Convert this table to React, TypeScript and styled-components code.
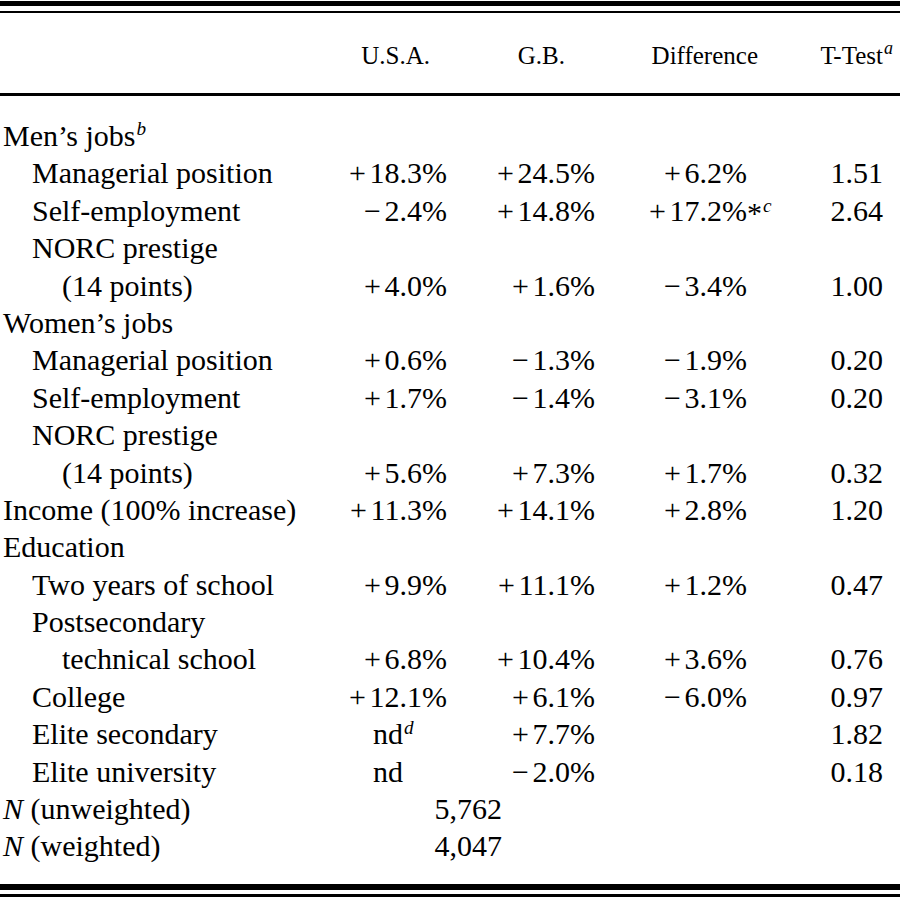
import React from "react";
import styled, { createGlobalStyle } from "styled-components";

const Global = createGlobalStyle`
  html, body { margin: 0; padding: 0; background: #fff; }
  body { font-family: "Liberation Serif", "Times New Roman", serif; color: #000; }
`;

const COLS = "330px 117px 148px 152px 136px 17px";

const Page = styled.div`
  width: 900px;
  padding-top: 1px;
  box-sizing: border-box;
`;

const Rule = styled.div<{ $h: number; $gap?: number }>`
  height: ${(p) => p.$h}px;
  margin-top: ${(p) => p.$gap ?? 0}px;
  background: #000;
`;

const HeaderRow = styled.div`
  display: grid;
  grid-template-columns: ${COLS};
  height: 80px;
  box-sizing: border-box;
  padding-top: 4px;
  align-items: center;
  font-size: 25px;
  line-height: 1;
`;

const HeadCell = styled.div<{ $shift: number }>`
  justify-self: end;
  margin-right: ${(p) => p.$shift}px;
  white-space: nowrap;
`;

const Body = styled.div`
  padding-top: 21px;
  padding-bottom: 19px;
`;

const Row = styled.div`
  display: grid;
  grid-template-columns: ${COLS};
  height: 37.4px;
  font-size: 30px;
  line-height: 37.4px;
`;

const Label = styled.div<{ $level: number }>`
  padding-left: ${(p) => [3, 32, 62][p.$level]}px;
  white-space: nowrap;
`;

const Num = styled.div`
  text-align: right;
  white-space: nowrap;
`;

const Span2 = styled.div`
  grid-column: span 2;
  text-align: right;
  padding-right: 93px;
`;

const Sign = styled.span`
  margin-right: 0.12em;
`;

const Sup = styled.sup<{ $big?: boolean }>`
  font-style: italic;
  font-size: ${(p) => (p.$big ? "0.72em" : "0.64em")};
  line-height: 0;
  vertical-align: 0.55em;
  margin-left: 1px;
`;

const Anchor = styled.span`
  position: relative;
`;

const Hang = styled.span`
  position: absolute;
  left: 100%;
  top: 0;
  white-space: nowrap;
`;

const Absent = styled.span`
  position: relative;
  display: inline-block;
  margin-right: 44px;
`;

const Ital = styled.i`
  font-style: italic;
`;

type RowData = {
  label: React.ReactNode;
  level: number;
  usa?: string;
  gb?: string;
  diff?: string;
  t?: string;
  usaNote?: string;
  diffNote?: string;
};

const rows: RowData[] = [
  { label: <>Men’s jobs<Sup>b</Sup></>, level: 0 },
  { label: "Managerial position", level: 1, usa: "+18.3", gb: "+24.5", diff: "+6.2", t: "1.51" },
  { label: "Self-employment", level: 1, usa: "-2.4", gb: "+14.8", diff: "+17.2", diffNote: "c", t: "2.64" },
  { label: "NORC prestige", level: 1 },
  { label: "(14 points)", level: 2, usa: "+4.0", gb: "+1.6", diff: "-3.4", t: "1.00" },
  { label: "Women’s jobs", level: 0 },
  { label: "Managerial position", level: 1, usa: "+0.6", gb: "-1.3", diff: "-1.9", t: "0.20" },
  { label: "Self-employment", level: 1, usa: "+1.7", gb: "-1.4", diff: "-3.1", t: "0.20" },
  { label: "NORC prestige", level: 1 },
  { label: "(14 points)", level: 2, usa: "+5.6", gb: "+7.3", diff: "+1.7", t: "0.32" },
  { label: "Income (100% increase)", level: 0, usa: "+11.3", gb: "+14.1", diff: "+2.8", t: "1.20" },
  { label: "Education", level: 0 },
  { label: "Two years of school", level: 1, usa: "+9.9", gb: "+11.1", diff: "+1.2", t: "0.47" },
  { label: "Postsecondary", level: 1 },
  { label: "technical school", level: 2, usa: "+6.8", gb: "+10.4", diff: "+3.6", t: "0.76" },
  { label: "College", level: 1, usa: "+12.1", gb: "+6.1", diff: "-6.0", t: "0.97" },
  { label: "Elite secondary", level: 1, usa: "nd", usaNote: "d", gb: "+7.7", t: "1.82" },
  { label: "Elite university", level: 1, usa: "nd", gb: "-2.0", t: "0.18" },
];

function Pct({ v }: { v?: string }) {
  if (!v) return null;
  const sign = v[0] === "-" ? "\u2212" : "+";
  return (
    <>
      <Sign>{sign}</Sign>
      {v.slice(1)}%
    </>
  );
}

export default function App() {
  return (
    <Page>
      <Global />
      <Rule $h={5} />
      <Rule $h={2} $gap={5} />
      <HeaderRow>
        <div />
        <HeadCell $shift={17}>U.S.A.</HeadCell>
        <HeadCell $shift={30}>G.B.</HeadCell>
        <HeadCell $shift={-11}>Difference</HeadCell>
        <HeadCell $shift={-10}>
          T-Test<Sup $big>a</Sup>
        </HeadCell>
      </HeaderRow>
      <Rule $h={3} />
      <Body>
        {rows.map((r, i) => (
          <Row key={i}>
            <Label $level={r.level}>{r.label}</Label>
            <Num>
              {r.usa === "nd" ? (
                <Absent>
                  nd
                  {r.usaNote && (
                    <Hang>
                      <Sup>{r.usaNote}</Sup>
                    </Hang>
                  )}
                </Absent>
              ) : (
                <Pct v={r.usa} />
              )}
            </Num>
            <Num>
              <Pct v={r.gb} />
            </Num>
            <Num>
              {r.diff && (
                <Anchor>
                  <Pct v={r.diff} />
                  {r.diffNote && (
                    <Hang>
                      *<Sup>{r.diffNote}</Sup>
                    </Hang>
                  )}
                </Anchor>
              )}
            </Num>
            <Num>{r.t}</Num>
          </Row>
        ))}
        <Row>
          <Label $level={0}>
            <Ital>N</Ital> (unweighted)
          </Label>
          <Span2>5,762</Span2>
        </Row>
        <Row>
          <Label $level={0}>
            <Ital>N</Ital> (weighted)
          </Label>
          <Span2>4,047</Span2>
        </Row>
      </Body>
      <Rule $h={6} />
      <Rule $h={3} $gap={4} />
    </Page>
  );
}
